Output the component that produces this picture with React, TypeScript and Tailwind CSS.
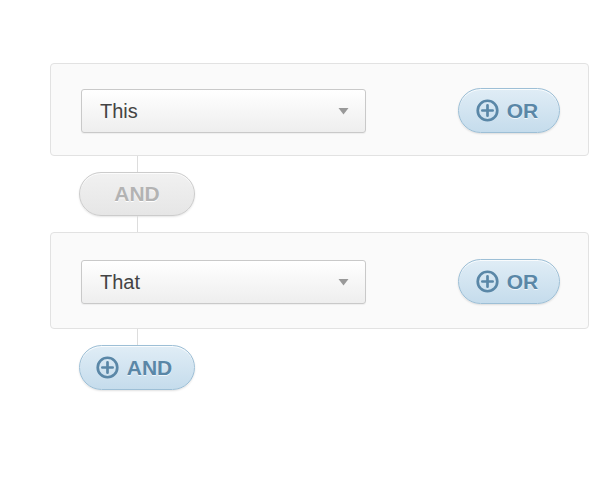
import React from "react";

const font = { fontFamily: '"Liberation Sans", Arial, sans-serif' };

function PlusCircle({ color }: { color: string }) {
  return (
    <svg width="23" height="23" viewBox="0 0 24 24" fill="none">
      <circle cx="12" cy="12" r="10.2" stroke={color} strokeWidth="2.8" />
      <path d="M12 6.6v10.8M6.6 12h10.8" stroke={color} strokeWidth="2.8" strokeLinecap="round" />
    </svg>
  );
}

function Select({ label }: { label: string }) {
  return (
    <div className="flex h-[44px] w-[285px] items-center justify-between rounded-[3px] border border-[#c9c9c9] bg-gradient-to-b from-[#ffffff] to-[#eeeeee] pl-[18px] pr-[16px] shadow-[0_1px_1px_rgba(0,0,0,0.05)]">
      <span className="text-[20px] text-[#444444]">{label}</span>
      <svg width="11" height="8" viewBox="0 0 11 8">
        <path d="M0.5 1h10L5.5 7.5z" fill="#999999" />
      </svg>
    </div>
  );
}

function BlueButton({ label, width, pr }: { label: string; width: string; pr: string }) {
  return (
    <div
      className={`flex h-[45px] ${width} ${pr} items-center justify-center gap-[8px] rounded-full border border-[#9dbfd6] bg-gradient-to-b from-[#e0edf6] to-[#c5dcec] text-[21px] font-bold text-[#5a87a7] shadow-[inset_0_1px_0_rgba(255,255,255,0.8),0_1px_2px_rgba(0,0,0,0.12)] [text-shadow:0_1px_0_rgba(255,255,255,0.7)]`}
    >
      <PlusCircle color="#5a87a7" />
      <span>{label}</span>
    </div>
  );
}

function Panel({ label, pt, pb }: { label: string; pt: string; pb: string }) {
  return (
    <div className={`flex w-[539px] items-center justify-between rounded-[4px] border border-[#e2e2e2] bg-[#fafafa] pl-[30px] pr-[28px] ${pt} ${pb}`}>
      <Select label={label} />
      <BlueButton label="OR" width="w-[102px]" pr="pr-[4px]" />
    </div>
  );
}

export default function App() {
  return (
    <div className="min-h-[500px] bg-white pl-[50px] pt-[63px]" style={font}>
      <div className="flex flex-col">
        <Panel label="This" pt="pt-[24px]" pb="pb-[22px]" />
        <div className="ml-[29px] flex w-[116px] flex-col items-center">
          <div className="h-[16px] w-px bg-[#dddddd]" />
          <div className="flex h-[44px] w-[116px] items-center justify-center rounded-full border border-[#cccccc] bg-gradient-to-b from-[#f1f1f1] to-[#e6e6e6] text-[21px] font-bold text-[#b3b3b3] shadow-[inset_0_1px_0_rgba(255,255,255,0.8),0_1px_2px_rgba(0,0,0,0.1)] [text-shadow:0_1px_0_#ffffff]">
            AND
          </div>
          <div className="h-[16px] w-px bg-[#dddddd]" />
        </div>
        <Panel label="That" pt="pt-[26px]" pb="pb-[24px]" />
        <div className="ml-[29px] flex w-[116px] flex-col items-center">
          <div className="h-[16px] w-px bg-[#dddddd]" />
          <BlueButton label="AND" width="w-[116px]" pr="pr-[6px]" />
        </div>
      </div>
    </div>
  );
}
